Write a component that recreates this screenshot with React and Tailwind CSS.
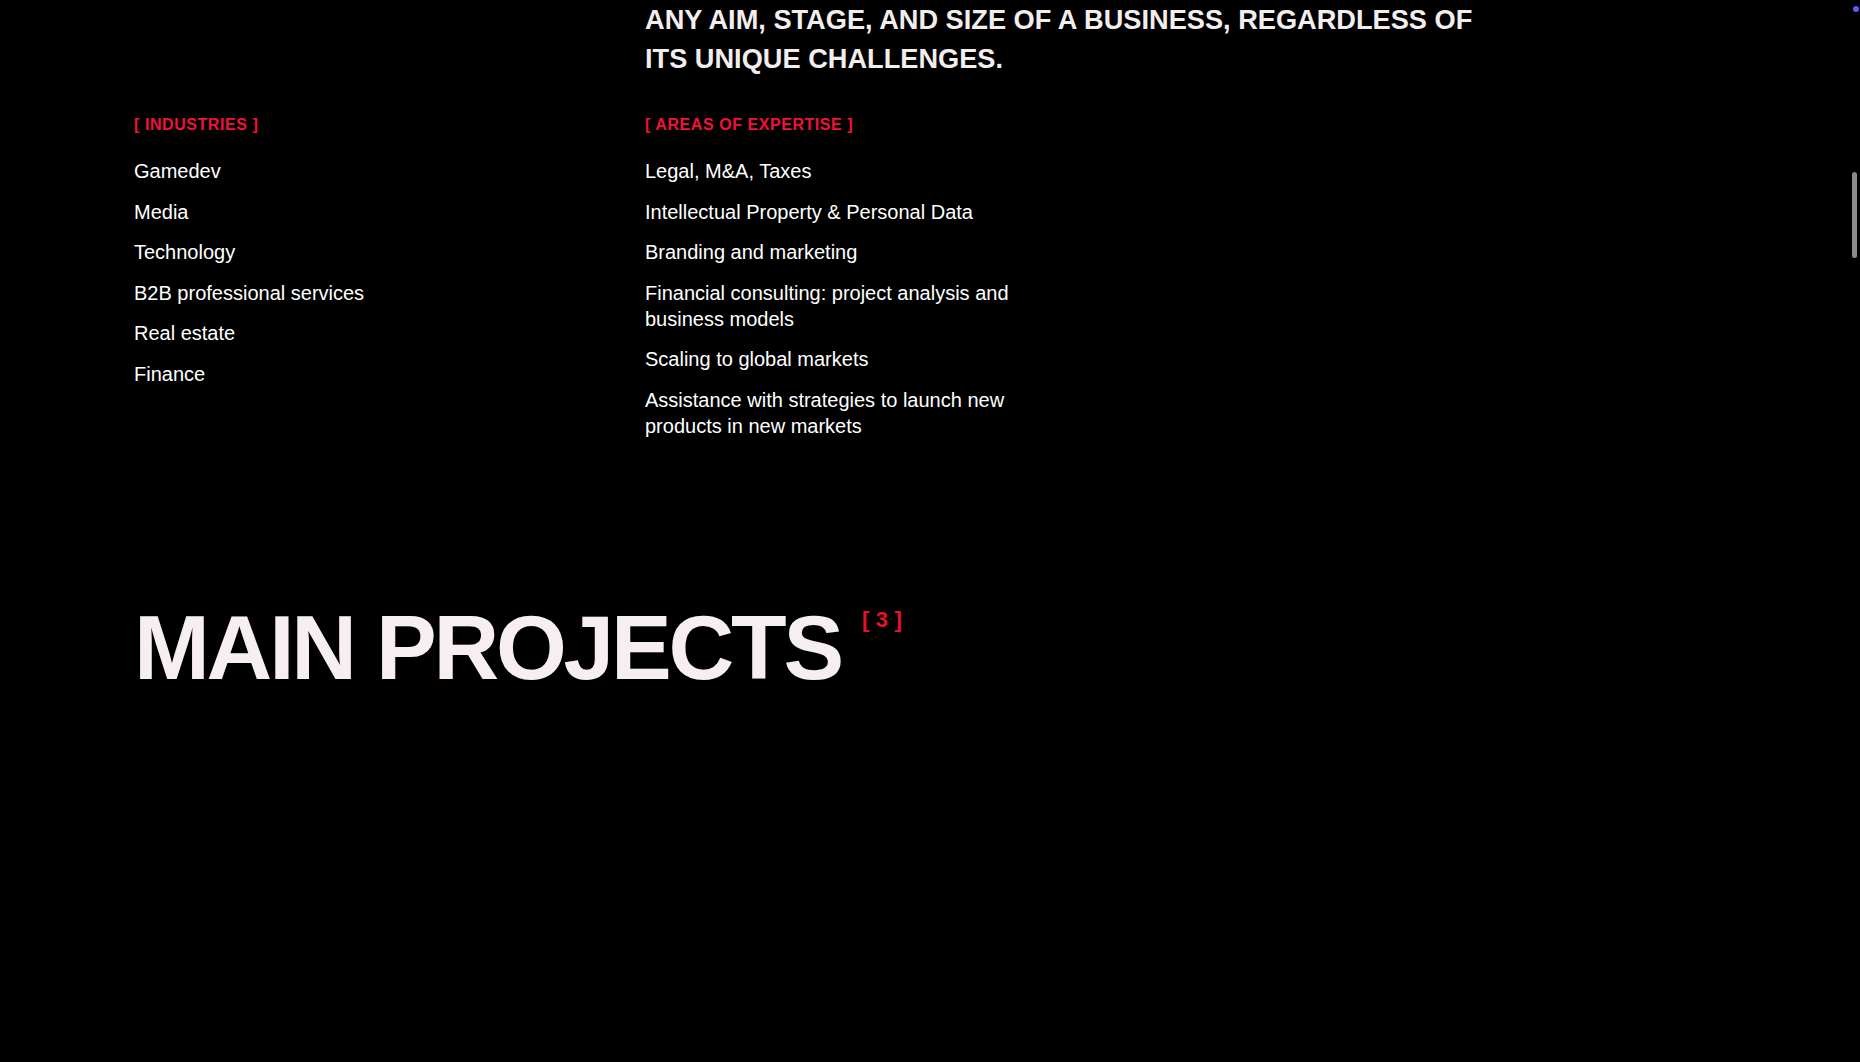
const industries = ['Gamedev', 'Media', 'Technology', 'B2B professional services', 'Real estate', 'Finance'];

const expertise = [
  'Legal, M&A, Taxes',
  'Intellectual Property & Personal Data',
  'Branding and marketing',
  'Financial consulting: project analysis and business models',
  'Scaling to global markets',
  'Assistance with strategies to launch new products in new markets',
];

function Label({ children }) {
  return (
    <div className="text-[16px] leading-[20px] font-bold uppercase tracking-[0.035em] text-[#f0123a]">
      [ {children} ]
    </div>
  );
}

function List({ items }) {
  return (
    <ul className="mt-[23px] flex flex-col gap-[14.5px]">
      {items.map((item) => (
        <li key={item} className="text-[20px] leading-[26px] text-white">
          {item}
        </li>
      ))}
    </ul>
  );
}

export default function App() {
  return (
    <div className="relative min-h-[1062px] w-full overflow-hidden bg-black font-['Liberation_Sans',Arial,sans-serif]">
      <section className="grid grid-cols-[511px_1fr] pl-[134px]">
        <div />
        <h2 className="max-w-[860px] pt-[1px] text-[27.2px] leading-[38.5px] font-bold uppercase text-[#f3eeee]">
          Any aim, stage, and size of a business, regardless of its unique challenges.
        </h2>

        <div className="mt-[37px]">
          <Label>Industries</Label>
          <List items={industries} />
        </div>
        <div className="mt-[37px] max-w-[380px]">
          <Label>Areas of expertise</Label>
          <List items={expertise} />
        </div>
      </section>

      <section className="mt-[163px] pl-[134px]">
        <div className="flex items-start">
          <h2 className="text-[91px] leading-none font-bold uppercase tracking-[-0.035em] text-[#f6eef0]">
            Main projects
          </h2>
          <span className="ml-[21px] mt-[5px] text-[22px] leading-[26px] font-bold tracking-[6.5px] text-[#e8102c]">
            [3]
          </span>
        </div>
      </section>

      {/* scrollbar + cursor dot overlays */}
      <div className="absolute right-[3px] top-[172px] h-[86px] w-[5px] rounded-full bg-[#8a8a8a]" />
      <div className="absolute right-[1px] top-[6px] h-[6px] w-[6px] rounded-full bg-[#5a5af5]" />
    </div>
  );
}
